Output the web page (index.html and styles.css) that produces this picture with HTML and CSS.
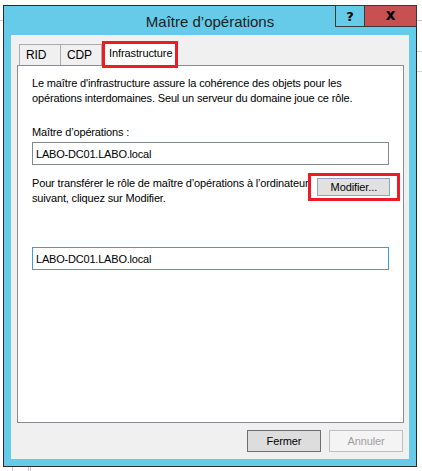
FILE: index.html
```html
<!DOCTYPE html>
<html lang="fr">
<head>
    <meta charset="UTF-8">
    <meta name="viewport" content="width=device-width, initial-scale=1.0">
    <title>Maître d’opérations</title>
    <link rel="stylesheet" href="styles.css">
</head>
<body>
    <div class="window">
        <div class="titlebar">
            <span class="title">Maître d’opérations</span>
            <div class="caption-buttons">
                <span class="cap-btn help">?</span>
                <span class="cap-btn close">x</span>
            </div>
        </div>

        <div class="client">
            <div class="tabs">
                <span class="tab first">RID</span>
                <span class="tab">CDP</span>
                <span class="tab active">Infrastructure</span>
            </div>

            <div class="panel">
                <p class="desc">Le maître d'infrastructure assure la cohérence des objets pour les<br>opérations interdomaines. Seul un serveur du domaine joue ce rôle.</p>

                <label class="field-label" for="master">Maître d’opérations :</label>
                <input class="textbox" id="master" type="text" value="LABO-DC01.LABO.local" readonly>

                <div class="transfer-row">
                    <p class="desc">Pour transférer le rôle de maître d’opérations à l’ordinateur<br>suivant, cliquez sur Modifier.</p>
                    <span class="highlight">
                        <button class="btn modify">Modifier...</button>
                    </span>
                </div>

                <input class="textbox focused" type="text" value="LABO-DC01.LABO.local" readonly>
            </div>

            <div class="footer">
                <button class="btn default">Fermer</button>
                <button class="btn" disabled>Annuler</button>
            </div>
        </div>
    </div>
</body>
</html>
```

FILE: styles.css
```css
body {
    margin: 0;
    width: 422px;
    height: 471px;
    overflow: hidden;
    font-family: "Liberation Sans", Arial, sans-serif;
    font-size: 11px;
    letter-spacing: -0.15px;
    color: #000;
    background:
        linear-gradient(#c8c8c8, #c8c8c8) 0 20px / 100% 1px no-repeat,
        linear-gradient(#d4d4d4, #d4d4d4) 417px 51px / 5px 1px no-repeat,
        linear-gradient(#d4d4d4, #d4d4d4) 417px 71px / 5px 1px no-repeat,
        linear-gradient(#c8c8c8, #c8c8c8) 12px 466px / 1px 5px no-repeat,
        linear-gradient(#c8c8c8, #c8c8c8) 28px 466px / 1px 5px no-repeat,
        linear-gradient(#c8c8c8, #c8c8c8) 30px 466px / 1px 5px no-repeat,
        #fff;
}
.window {
    position: relative;
    box-sizing: border-box;
    width: 414px;
    height: 462px;
    margin: 5px 0 0 3px;
    border: 1px solid #2b2b2b;
    background: #66cbe9;
    padding: 0 7px 7px 7px;
    display: flex;
    flex-direction: column;
}
.titlebar {
    height: 29px;
    display: flex;
    align-items: center;
    justify-content: center;
}
.title {
    font-size: 15px;
    letter-spacing: 0;
    color: #1e1e1e;
    margin-top: 1px;
}
.caption-buttons {
    position: absolute;
    top: -1px;
    right: -1px;
    display: flex;
}
.cap-btn {
    box-sizing: border-box;
    height: 22px;
    border: 1px solid #3a3a3a;
    display: flex;
    align-items: center;
    justify-content: center;
    font-family: "DejaVu Sans", sans-serif;
    font-weight: bold;
    font-size: 13px;
    letter-spacing: 0;
    color: #000;
}
.help {
    width: 29px;
    background: #66cbe9;
    border-right: none;
}
.close {
    width: 53px;
    background: #c75050;
    font-size: 15px;
    padding-bottom: 3px;
}
.client {
    flex: 1;
    background: #f0f0f0;
    padding: 6px 5px 7px 6px;
    display: flex;
    flex-direction: column;
}
.tabs {
    height: 24px;
    display: flex;
    align-items: flex-end;
    padding-left: 2px;
    position: relative;
    z-index: 1;
}
.tab {
    box-sizing: border-box;
    height: 21px;
    width: 41px;
    border: 1px solid #acacac;
    border-left: none;
    border-bottom: none;
    background: #f0f0f0;
    padding: 3px 0 0 6px;
    font-size: 12px;
}
.tab.first {
    width: 42px;
    border-left: 1px solid #acacac;
}
.tab.active {
    width: 76px;
    height: 27px;
    margin-bottom: -3px;
    border: 3px solid #ed1c24;
    background: #fff;
    padding: 3px 0 0 4px;
    font-size: 11px;
    letter-spacing: -0.1px;
}
.panel {
    box-sizing: border-box;
    height: 358px;
    background: #fff;
    border: 1px solid #898c95;
    padding: 10px 14px 0 14px;
}
.desc {
    margin: 0;
    line-height: 15px;
    white-space: nowrap;
}
.field-label {
    display: block;
    margin-top: 19px;
    line-height: 15px;
}
.textbox {
    display: block;
    box-sizing: border-box;
    width: 357px;
    height: 23px;
    margin: 2px 0 0 0;
    padding: 0 3px;
    border: 1px solid #828790;
    font-family: inherit;
    font-size: 11px;
    letter-spacing: -0.2px;
    color: #000;
    background: #fff;
    outline: none;
}
.textbox.focused {
    border-color: #3c9be4;
    margin-top: 41px;
}
.transfer-row {
    display: flex;
    justify-content: space-between;
    align-items: flex-start;
    margin-top: 8px;
}
.transfer-row .desc {
    margin-top: 3px;
}
.highlight {
    display: block;
    border: 3px solid #ed1c24;
    padding: 2px 7px 2px 6px;
    margin-right: -10px;
}
.btn {
    box-sizing: border-box;
    height: 22px;
    width: 74px;
    border: 1px solid #adadad;
    background: #e1e1e1;
    font-family: inherit;
    font-size: 11px;
    letter-spacing: -0.1px;
    color: #000;
    padding: 0;
}
.btn.modify {
    display: block;
    height: 18px;
    width: 73px;
    border-color: #8fa6bd;
    line-height: 16px;
}
.btn.default {
    border-color: #6e6e6e;
    background: #dddddd;
}
.btn:disabled {
    border-color: #bfbfbf;
    background: #f4f4f4;
    color: #a0a0a0;
}
.footer {
    display: flex;
    justify-content: flex-end;
    gap: 8px;
    margin-top: 7px;
    padding-right: 1px;
}
```
